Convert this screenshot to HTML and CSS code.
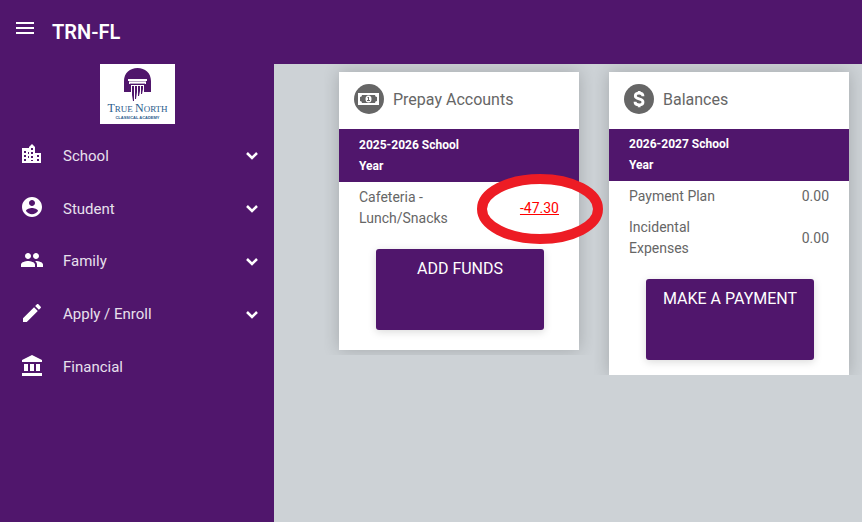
FILE: index.html
```html
<!DOCTYPE html>
<html lang="en">
<head>
<meta charset="utf-8">
<meta name="viewport" content="width=device-width, initial-scale=1">
<title>TRN-FL</title>
<link rel="stylesheet" href="styles.css">
</head>
<body>
<header class="topbar">
  <button class="menu-button" type="button" aria-label="Menu">
    <svg width="18" height="12" viewBox="0 0 18 12"><path fill="currentColor" d="M0 0h18v2H0zM0 5h18v2H0zM0 10h18v2H0z"/></svg>
  </button>
  <h1 class="brand">TRN-FL</h1>
</header>
<div class="layout">
  <aside class="sidebar">
    <svg class="logo" viewBox="0 0 75 60" role="img" aria-label="True North Classical Academy">
      <rect width="75" height="60" fill="#fff"/>
      <path fill="#50166c" d="M24 28V17C24 9 30 4 37.500 4S51 9 51 17V28H44V21H31V28Z"/>
      <path fill="#fff" d="M28 15h19v2H28zM29 18h17v2H29zM31 21h13v7H31z"/>
      <path fill="#b9a5c6" d="M29 17h17v1H29zM30 19h15v1H30z"/>
      <path fill="#50166c" d="M32 22h2v15h-1l-1-6zM35 22h2v6l-1 7h-1zM38 22h2v5l-1 5h-1zM41 22h2v3l-1 5h-1z"/>
      <text class="logo-name" x="37.500" y="48" text-anchor="middle"><tspan class="logo-cap">T</tspan>RUE <tspan class="logo-cap">N</tspan>ORTH</text>
      <text class="logo-sub" x="37.500" y="55" text-anchor="middle">CLASSICAL ACADEMY</text>
    </svg>
    <nav class="nav">
      <a class="nav-item" href="#">
        <svg class="nav-icon" viewBox="0 0 24 24"><path fill-rule="evenodd" d="M15 9V5l-1-1-2-2-2 2-1 1v1H2v15h19V11h-6zM4 9h2v2H4zM4 13h2v2H4zM4 17h2v2H4zM11 6h2v2h-2zM11 10h2v2h-2zM11 14h2v2h-2zM11 18h2v1h-2zM17 13h2v2h-2zM17 17h2v2h-2zM8 10h1v2H8zM8 14h1v2H8z"/></svg>
        <span class="nav-label">School</span>
        <svg class="chevron" viewBox="0 0 12 8"><path d="M1 1l5 5 5-5"/></svg>
      </a>
      <a class="nav-item" href="#">
        <svg class="nav-icon" viewBox="0 0 24 24"><path d="M12 2C6.480 2 2 6.480 2 12s4.480 10 10 10 10-4.480 10-10S17.520 2 12 2zm0 3c1.660 0 3 1.340 3 3s-1.340 3-3 3-3-1.340-3-3 1.340-3 3-3zm0 14.200c-2.500 0-4.710-1.280-6-3.220.030-1.990 4-3.080 6-3.080 1.990 0 5.970 1.090 6 3.080-1.290 1.940-3.500 3.220-6 3.220z"/></svg>
        <span class="nav-label">Student</span>
        <svg class="chevron" viewBox="0 0 12 8"><path d="M1 1l5 5 5-5"/></svg>
      </a>
      <a class="nav-item" href="#">
        <svg class="nav-icon" viewBox="0 0 24 24"><path d="M16 11c1.660 0 2.990-1.340 2.990-3S17.660 5 16 5s-3 1.340-3 3 1.340 3 3 3zm-8 0c1.660 0 2.990-1.340 2.990-3S9.660 5 8 5 5 6.340 5 8s1.340 3 3 3zm0 2c-2.330 0-7 1.170-7 3.500V19h14v-2.500c0-2.330-4.670-3.500-7-3.500zm8 0c-.290 0-.620.020-.970.050 1.160.840 1.970 1.970 1.970 3.450V19h6v-2.500c0-2.330-4.670-3.500-7-3.500z"/></svg>
        <span class="nav-label">Family</span>
        <svg class="chevron" viewBox="0 0 12 8"><path d="M1 1l5 5 5-5"/></svg>
      </a>
      <a class="nav-item" href="#">
        <svg class="nav-icon" viewBox="0 0 24 24"><path d="M3 17.250V21h3.750L17.810 9.940l-3.750-3.750L3 17.250zM20.710 7.040c.390-.390.390-1.020 0-1.410l-2.340-2.340c-.390-.390-1.020-.390-1.410 0l-1.830 1.830 3.750 3.750 1.830-1.830z"/></svg>
        <span class="nav-label">Apply / Enroll</span>
        <svg class="chevron" viewBox="0 0 12 8"><path d="M1 1l5 5 5-5"/></svg>
      </a>
      <a class="nav-item" href="#">
        <svg class="nav-icon" viewBox="0 0 24 24"><path d="M12 1L2 6v2h20V6zM4 10h4v7H4zM10 10h4v7h-4zM16 10h4v7h-4zM2 19h20v3H2z"/></svg>
        <span class="nav-label">Financial</span>
      </a>
    </nav>
  </aside>
  <main class="content">
    <div class="panel">
      <section class="card card-prepay">
        <h2 class="card-head">
          <svg class="card-icon" viewBox="0 0 30 30">
            <circle cx="15" cy="15" r="15" fill="#666"/>
            <rect x="4" y="9" width="21" height="12" fill="#fff"/>
            <path fill="#666" d="M8 11h13a2 2 0 0 0 2 2v4a2 2 0 0 0-2 2H8a2 2 0 0 0-2-2v-4a2 2 0 0 0 2-2z"/>
            <ellipse cx="14.500" cy="15" rx="3" ry="3.500" fill="#fff"/>
            <path fill="#666" d="M14 13h1v3h1v1h-3v-1h1v-2h-1z"/>
          </svg>
          Prepay Accounts
        </h2>
        <table class="accounts">
          <thead><tr><th scope="col">2025-2026 School Year</th><th></th></tr></thead>
          <tbody><tr><td>Cafeteria - Lunch/Snacks</td><td class="amount"><a class="negative" href="#">-47.30</a></td></tr></tbody>
        </table>
        <button class="action" type="button">ADD FUNDS</button>
      </section>
    </div>
    <div class="panel panel-cut">
      <section class="card">
        <h2 class="card-head">
          <svg class="card-icon" viewBox="0 0 30 30">
            <circle cx="15" cy="15" r="15" fill="#666"/>
            <path fill="none" stroke="#fff" stroke-width="2.800" d="M19 12.200C19 10.300 17.500 9.200 15.200 9.200S11.300 10.300 11.300 12C11.300 16 19 13.800 19 18c0 1.800-1.600 2.900-3.800 2.900S11 19.800 11 17.700M15.200 7v2.200M15.200 21v2.200"/>
          </svg>
          Balances
        </h2>
        <table class="accounts">
          <thead><tr><th scope="col">2026-2027 School Year</th><th></th></tr></thead>
          <tbody>
            <tr><td>Payment Plan</td><td class="amount">0.00</td></tr>
            <tr><td>Incidental Expenses</td><td class="amount">0.00</td></tr>
          </tbody>
        </table>
        <button class="action" type="button">MAKE A PAYMENT</button>
      </section>
    </div>
    <svg class="callout" viewBox="0 0 126 70" aria-hidden="true"><ellipse cx="63" cy="35" rx="58" ry="30"/></svg>
  </main>
</div>
</body>
</html>
```
FILE: styles.css
```css
* { box-sizing: border-box; }

body {
  margin: 0;
  min-height: 100vh;
  display: flex;
  flex-direction: column;
  font-family: Roboto, "Liberation Sans", sans-serif;
  font-size: 14px;
  line-height: 21px;
  color: #666;
  background: #cdd2d6;
}

.topbar {
  height: 64px;
  padding: 0 16px;
  display: flex;
  align-items: center;
  gap: 18px;
  background: #50166c;
  color: #fff;
}

.menu-button {
  padding: 0 0 8px;
  border: 0;
  background: none;
  color: inherit;
  line-height: 0;
}

.brand {
  margin: 0;
  font-size: 20px;
  line-height: 24px;
  font-weight: 600;
}

.layout {
  flex: 1;
  display: flex;
}

.sidebar {
  flex: 0 0 274px;
  background: #50166c;
}

.logo {
  display: block;
  width: 75px;
  height: 60px;
  margin: 0 0 6px 100px;
}

.logo-name {
  font-family: "Liberation Serif", serif;
  font-size: 9px;
  fill: #2a5b8c;
}

.logo-cap { font-size: 12px; }

.logo-sub {
  font-family: "Liberation Sans", sans-serif;
  font-size: 4px;
  font-weight: 700;
  fill: #2a5b8c;
}

.nav {
  height: 264px;
  display: flex;
  flex-direction: column;
}

.nav-item {
  flex: 1;
  display: flex;
  align-items: center;
  padding: 0 16px 0 20px;
  color: #e8e0ec;
  font-size: 15px;
  text-decoration: none;
}

.nav-icon {
  width: 24px;
  height: 24px;
  margin: 0 19px 4px 0;
  fill: #fff;
}

.nav-label { flex: 1; }

.chevron {
  width: 12px;
  height: 8px;
  fill: none;
  stroke: #fff;
  stroke-width: 2.5px;
}

.content {
  flex: 1;
  min-width: 0;
  position: relative;
  display: flex;
  align-items: flex-start;
  padding-left: 50px;
  overflow: hidden;
}

.panel {
  flex: 0 0 270px;
  padding: 8px 15px 5px;
  overflow: hidden;
}

.panel-cut { padding-bottom: 0; }

.card {
  padding-bottom: 20px;
  background: #fff;
  box-shadow: 0 0 16px rgba(0, 0, 0, 0.2);
}

.panel-cut .card { padding-bottom: 15px; }

.card-head {
  height: 57px;
  margin: 0;
  padding: 0 15px 3px;
  display: flex;
  align-items: center;
  gap: 9px;
  font-size: 16px;
  font-weight: 400;
}

.card-icon {
  width: 30px;
  height: 30px;
}

.accounts {
  width: 100%;
  border-collapse: collapse;
  table-layout: fixed;
}

.accounts th {
  padding: 5px 0 5px 20px;
  background: #50166c;
  color: #fff;
  font-size: 12px;
  font-weight: 700;
  text-align: left;
}

.card-prepay th { padding-top: 6px; }

.accounts td { padding: 5px 0 5px 20px; }

.accounts .amount {
  padding: 5px 20px 5px 0;
  text-align: right;
}

.negative { color: #f00; }

.action {
  width: 70%;
  height: 81px;
  margin: 15px 35px 0 37px;
  padding: 9px 0;
  display: flex;
  justify-content: center;
  align-items: flex-start;
  border: 0;
  border-radius: 3px;
  background: #50166c;
  color: #fff;
  font: 400 16px/21px Roboto, "Liberation Sans", sans-serif;
  box-shadow: 0 2px 8px rgba(0, 0, 0, 0.15);
}

.callout {
  position: absolute;
  left: 203px;
  top: 110px;
  width: 126px;
  height: 70px;
  fill: none;
  stroke: #ed1c24;
  stroke-width: 10px;
  pointer-events: none;
}
```
